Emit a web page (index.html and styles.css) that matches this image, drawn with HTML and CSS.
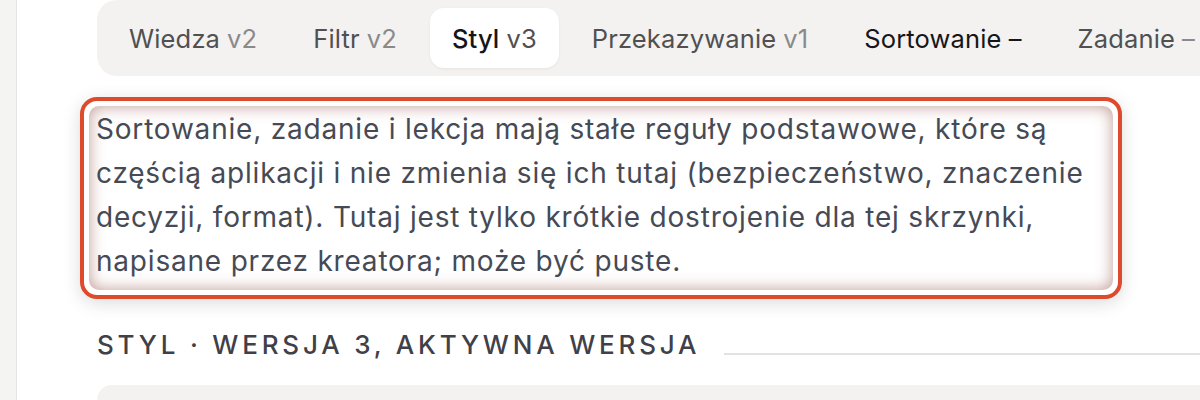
FILE: index.html
```html
<!DOCTYPE html>
<html lang="pl">
<head>
<meta charset="utf-8">
<link rel="stylesheet" href="styles.css">
</head>
<body>
<div class="page">
  <aside class="rail"></aside>
  <main class="main">
    <nav class="tabs">
      <div class="tab">Wiedza <span class="ver">v2</span></div>
      <div class="tab">Filtr <span class="ver">v2</span></div>
      <div class="tab active">Styl <span class="ver">v3</span></div>
      <div class="tab">Przekazywanie <span class="ver">v1</span></div>
      <div class="tab dark">Sortowanie <span class="ver">–</span></div>
      <div class="tab">Zadanie <span class="ver">–</span></div>
    </nav>
    <div class="callout">
      <div class="callout-inner">Sortowanie, zadanie i lekcja mają stałe reguły podstawowe, które są częścią aplikacji i nie zmienia się ich tutaj (bezpieczeństwo, znaczenie decyzji, format). Tutaj jest tylko krótkie dostrojenie dla tej skrzynki, napisane przez kreatora; może być puste.</div>
    </div>
    <div class="section-head">
      <span class="section-title">Styl · wersja 3, aktywna wersja</span>
      <span class="section-rule"></span>
    </div>
    <div class="editor"></div>
  </main>
</div>
</body>
</html>
```
FILE: styles.css
```css
html, body {
  margin: 0;
  padding: 0;
  background: #ffffff;
  overflow: hidden;
}
body {
  font-family: Inter, "Noto Sans", "Liberation Sans", sans-serif;
  width: 1200px;
  height: 400px;
}
.page {
  display: flex;
  height: 400px;
}
.rail {
  width: 16px;
  flex: none;
  background: #f4f4f3;
  border-right: 1px solid #e4e4e2;
}
.main {
  flex: 1;
  min-width: 0;
  padding-left: 63px;
  display: flex;
  flex-direction: column;
}
.tabs {
  display: flex;
  gap: 10px;
  margin-left: 17px;
  margin-right: -200px;
  padding: 8px 9px;
  background: #f3f2f0;
  border-radius: 20px;
  white-space: nowrap;
}
.tab {
  height: 60px;
  display: flex;
  align-items: center;
  padding: 0 23px;
  font-size: 25.5px;
  letter-spacing: 0.15px;
  color: #505052;
  border-radius: 14px;
  flex: none;
}
.tab .ver {
  color: #8a8a8c;
  margin-left: 7px;
}
.tab.active {
  background: #ffffff;
  color: #161618;
  font-weight: 500;
  padding: 0 22px;
  box-shadow: 0 1px 3px rgba(0,0,0,0.06);
}
.tab.active .ver {
  color: #505052;
  font-weight: 400;
}
.tab.dark {
  color: #161618;
}
.tab.dark .ver {
  color: #161618;
}
.callout {
  margin-top: 21px;
  width: 1042px;
  box-sizing: border-box;
  border: 4px solid #dd4a2c;
  padding: 5px;
  border-radius: 17px;
  background: #ffffff;
  box-shadow: 0 4px 18px rgba(0,0,0,0.14);
}
.callout-inner {
  border-radius: 10px;
  padding: 1px 7px 7px;
  font-size: 28px;
  letter-spacing: 0.8px;
  line-height: 44px;
  color: #464a55;
  box-shadow: inset 0 0 16px rgba(140, 70, 60, 0.55);
}
.section-head {
  display: flex;
  align-items: flex-end;
  margin-top: 31px;
  margin-left: 17px;
  margin-right: -80px;
}
.section-title {
  font-size: 26px;
  line-height: 30px;
  font-weight: 500;
  letter-spacing: 3.8px;
  text-transform: uppercase;
  color: #3f4048;
  white-space: nowrap;
}
.section-rule {
  flex: 1;
  height: 2px;
  background: #e3e2e0;
  margin: 0 0 5px 24px;
}
.editor {
  margin-top: 25px;
  margin-left: 17px;
  margin-right: -80px;
  height: 80px;
  background: #f3f2f0;
  border-radius: 20px 20px 0 0;
}
```
